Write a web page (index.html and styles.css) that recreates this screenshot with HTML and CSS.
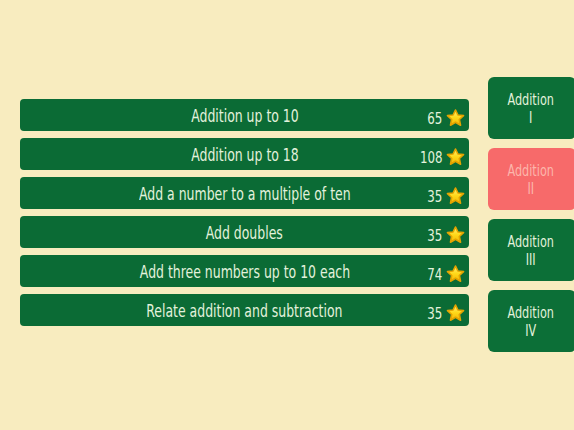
FILE: index.html
```html
<!DOCTYPE html>
<html>
<head>
<meta charset="utf-8">
<link rel="stylesheet" href="styles.css">
</head>
<body>
<svg width="0" height="0" class="defs">
  <defs>
    <linearGradient id="sg" x1="0" y1="0" x2="0" y2="1">
      <stop offset="0" stop-color="#fff27a"/>
      <stop offset="0.5" stop-color="#ffd91a"/>
      <stop offset="1" stop-color="#f2b705"/>
    </linearGradient>
    <symbol id="star" viewBox="0 0 24 24">
      <path d="M12 2.4 L14.9 8.4 L21.6 9.2 L16.6 13.8 L18 20.6 L12 17.2 L6 20.6 L7.4 13.8 L2.4 9.2 L9.1 8.4 Z" fill="url(#sg)" stroke="#e5a400" stroke-width="2" stroke-linejoin="round"/>
    </symbol>
  </defs>
</svg>
<div class="screen">
  <div class="list">
    <div class="row"><span class="title">Addition up to 10</span><span class="score"><span class="num">65</span><svg class="star"><use href="#star"/></svg></span></div>
    <div class="row"><span class="title">Addition up to 18</span><span class="score"><span class="num">108</span><svg class="star"><use href="#star"/></svg></span></div>
    <div class="row"><span class="title">Add a number to a multiple of ten</span><span class="score"><span class="num">35</span><svg class="star"><use href="#star"/></svg></span></div>
    <div class="row"><span class="title">Add doubles</span><span class="score"><span class="num">35</span><svg class="star"><use href="#star"/></svg></span></div>
    <div class="row"><span class="title">Add three numbers up to 10 each</span><span class="score"><span class="num">74</span><svg class="star"><use href="#star"/></svg></span></div>
    <div class="row"><span class="title">Relate addition and subtraction</span><span class="score"><span class="num">35</span><svg class="star"><use href="#star"/></svg></span></div>
  </div>
  <div class="tabs">
    <div class="tab"><span class="label">Addition<br>I</span></div>
    <div class="tab active"><span class="label">Addition<br>II</span></div>
    <div class="tab"><span class="label">Addition<br>III</span></div>
    <div class="tab"><span class="label">Addition<br>IV</span></div>
  </div>
</div>
</body>
</html>
```
FILE: styles.css
```css
html, body {
  margin: 0;
  padding: 0;
  width: 574px;
  height: 430px;
  overflow: hidden;
  background: #f8ecbf;
}
.defs { position: absolute; }
.screen {
  height: 430px;
  display: flex;
  align-items: flex-start;
  padding-left: 20px;
  gap: 19px;
  font-family: "DejaVu Sans Condensed", "DejaVu Sans", sans-serif;
  color: #e3f2dc;
}
.list {
  flex: 0 0 449px;
  width: 449px;
  margin-top: 99px;
  display: flex;
  flex-direction: column;
  gap: 7px;
}
.row {
  position: relative;
  height: 32px;
  background: #0b6b35;
  border-radius: 4px;
  display: flex;
  align-items: center;
  justify-content: center;
  font-size: 17px;
}
.title {
  display: inline-block;
  transform: scaleX(0.815);
  white-space: nowrap;
  padding-top: 1px;
}
.score {
  position: absolute;
  right: 3px;
  top: 9px;
  display: flex;
  align-items: center;
  gap: 3px;
  font-size: 16px;
}
.num {
  display: inline-block;
  transform: scaleX(0.82);
  transform-origin: right center;
  margin-left: -4px;
  padding-top: 1px;
}
.star { width: 21px; height: 20px; }
.tabs {
  flex: 0 0 88px;
  margin-top: 77px;
  display: flex;
  flex-direction: column;
  gap: 9px;
}
.tab {
  width: 88px;
  height: 62px;
  box-sizing: border-box;
  background: #0c6f37;
  border-radius: 6px;
  display: flex;
  align-items: center;
  justify-content: center;
  text-align: center;
  font-size: 16px;
  line-height: 18px;
  padding-right: 2px;
  padding-top: 2px;
}
.label {
  display: inline-block;
  transform: scaleX(0.78);
}
.tab.active {
  background: #f76a6a;
  color: #fcb6ac;
}
```
